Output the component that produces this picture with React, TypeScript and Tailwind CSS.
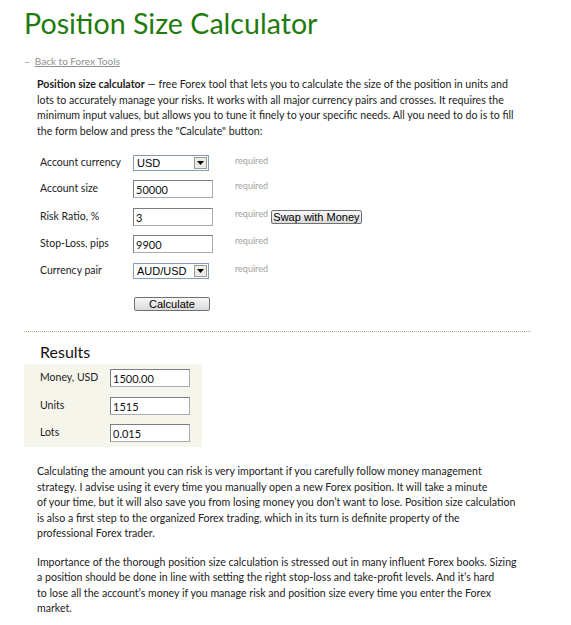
import React from 'react'

const body = { fontFamily: 'Lato, "Liberation Sans", sans-serif' }
const ctl = { fontFamily: '"Liberation Sans", Arial, sans-serif' }

function Field({ value }: { value: string }) {
  return (
    <input
      readOnly
      value={value}
      style={body}
      className="block h-[18px] w-[80px] border border-[#a5acb2] border-t-[#7b7f83] border-l-[#7b7f83] bg-white px-[2px] text-[11px] text-[#111] outline-none"
    />
  )
}

function Select({ value }: { value: string }) {
  return (
    <div className="flex h-[16px] w-[76px] items-stretch border border-[#7f9db9] bg-white" style={ctl}>
      <span className="flex-1 pl-[3px] text-[11px] leading-[14px] text-black">{value}</span>
      <span className="m-[1px] flex w-[13px] items-center justify-center border border-[#9a9a9a] bg-[#ecebe6]">
        <svg width="7" height="4" viewBox="0 0 7 4">
          <path d="M0 0h7L3.5 4z" fill="#000" />
        </svg>
      </span>
    </div>
  )
}

function Btn({ children, w }: { children: React.ReactNode; w: string }) {
  return (
    <button
      style={ctl}
      className={`${w} block h-[14px] whitespace-nowrap rounded-[2px] border border-[#707070] bg-gradient-to-b from-[#f8f8f8] to-[#dadada] text-[11px] leading-[12px] text-black`}
    >
      {children}
    </button>
  )
}

const Req = () => <span className="self-start text-[9px] leading-[12px] text-[#a0a0a0]">required</span>

export default function App() {
  const rows: { label: string; top: string; ctrl: React.ReactNode; extra?: React.ReactNode }[] = [
    { label: 'Account currency', top: 'mt-[16px]', ctrl: <Select value="USD" /> },
    { label: 'Account size', top: 'mt-[9px]', ctrl: <Field value="50000" /> },
    {
      label: 'Risk Ratio, %',
      top: 'mt-[10px]',
      ctrl: <Field value="3" />,
      extra: <Btn w="w-[91px]">Swap with Money</Btn>,
    },
    { label: 'Stop-Loss, pips', top: 'mt-[9px]', ctrl: <Field value="9900" /> },
    { label: 'Currency pair', top: 'mt-[10px]', ctrl: <Select value="AUD/USD" /> },
  ]

  return (
    <div className="min-h-screen bg-white pl-[24px] text-[#222]" style={body}>
      <h1 className="pt-[5px] text-[28.6px] leading-[36px] text-[#1f7b0e]">Position Size Calculator</h1>

      <p className="mt-[13px] text-[10px] leading-[14px] text-[#8f8f8f]">
        <span className="mr-[5px]">–</span>
        <a href="#" className="underline">Back to Forex Tools</a>
      </p>

      <p className="ml-[13px] mt-[9px] text-[10.6px] leading-[15.5px]">
        <b>Position size calculator</b> — free Forex tool that lets you to calculate the size of the position in units and
        <br />
        lots to accurately manage your risks. It works with all major currency pairs and crosses. It requires the
        <br />
        minimum input values, but allows you to tune it finely to your specific needs. All you need to do is to fill
        <br />
        the form below and press the "Calculate" button:
      </p>

      {/* input form */}
      <div className="ml-[16px] text-[10.5px]">
        {rows.map((r) => (
          <div key={r.label} className={`flex items-center ${r.top}`}>
            <span className="w-[93px]">{r.label}</span>
            <div className="w-[102px]">{r.ctrl}</div>
            <Req />
            {r.extra && <span className="ml-[3px] flex">{r.extra}</span>}
          </div>
        ))}
        <div className="mt-[18px] pl-[94px]">
          <Btn w="w-[76px]">Calculate</Btn>
        </div>
      </div>

      <div className="mt-[20px] mr-[40px] border-t border-dotted border-[#a7b58a]" />

      {/* results */}
      <h2 className="ml-[16px] mt-[10px] text-[16px] leading-[20px] text-[#111]">Results</h2>
      <div className="mt-[2px] w-[178px] bg-[#f5f5eb] pb-[5px] pl-[16px] pt-[5px] text-[10.5px]">
        {[
          ['Money, USD', '1500.00'],
          ['Units', '1515'],
          ['Lots', '0.015'],
        ].map(([l, v], i) => (
          <div key={l} className={`flex items-center ${i === 1 ? 'mt-[10px]' : i === 2 ? 'mt-[9px]' : ''}`}>
            <span className="w-[70px]">{l}</span>
            <Field value={v} />
          </div>
        ))}
      </div>

      <div className="ml-[13px] mt-[17px] text-[10.6px] leading-[15.5px]">
        <p>
          Calculating the amount you can risk is very important if you carefully follow money management
          <br />
          strategy. I advise using it every time you manually open a new Forex position. It will take a minute
          <br />
          of your time, but it will also save you from losing money you don’t want to lose. Position size calculation
          <br />
          is also a first step to the organized Forex trading, which in its turn is definite property of the
          <br />
          professional Forex trader.
        </p>
        <p className="mt-[13px]">
          Importance of the thorough position size calculation is stressed out in many influent Forex books. Sizing
          <br />
          a position should be done in line with setting the right stop-loss and take-profit levels. And it’s hard
          <br />
          to lose all the account’s money if you manage risk and position size every time you enter the Forex
          <br />
          market.
        </p>
      </div>
    </div>
  )
}
